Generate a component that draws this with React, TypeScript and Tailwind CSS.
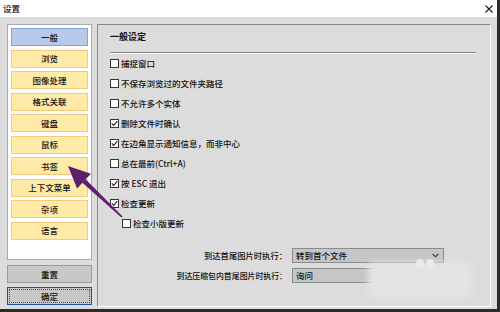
import React from "react";

const items: { label: string; checked: boolean; indent?: boolean }[] = [
  { label: "捕捉窗口", checked: false },
  { label: "不保存浏览过的文件夹路径", checked: false },
  { label: "不允许多个实体", checked: false },
  { label: "删除文件时确认", checked: true },
  { label: "在边角显示通知信息，而非中心", checked: true },
  { label: "总在最前(Ctrl+A)", checked: false },
  { label: "按 ESC 退出", checked: true },
  { label: "检查更新", checked: true },
  { label: "检查小版更新", checked: false, indent: true },
];

const navs = ["一般", "浏览", "图像处理", "格式关联", "键盘", "鼠标", "书签", "上下文菜单", "杂项", "语言"];

function Box({ checked }: { checked: boolean }) {
  return (
    <span className="w-[9px] h-[9px] shrink-0 bg-white border border-[#333333] relative">
      {checked && (
        <svg className="absolute left-0 top-0" width="7" height="7" viewBox="0 0 7 7">
          <polyline points="0.8,3.4 2.7,5.4 6.3,1.2" fill="none" stroke="#222" strokeWidth="1.1" />
        </svg>
      )}
    </span>
  );
}

export default function App() {
  return (
    <div className="w-[500px] h-[312px] relative overflow-hidden bg-[#dcdcdc] border-r-[3px] border-b-[3px] border-[#2b2b2b] font-['Noto_Sans_CJK_SC','Liberation_Sans',sans-serif] font-medium text-[#111111] flex flex-col">
      <div className="h-[17px] shrink-0 bg-white flex items-center justify-between pl-[3px] pr-[4px]">
        <span className="text-[8.5px] leading-none">设置</span>
        <svg width="8" height="8" viewBox="0 0 8 8">
          <path d="M0.5 0.5 L7.5 7.5 M7.5 0.5 L0.5 7.5" stroke="#1a1a1a" strokeWidth="1.1" />
        </svg>
      </div>
      <div className="flex-1 flex pt-[7px] pl-[7px] pr-[6px] pb-[2px] gap-[5px]">
        <div className="w-[85px] flex flex-col">
          <div className="h-[236px] bg-white border border-[#a9a9a9] p-[3px] flex flex-col gap-[3.5px]">
            {navs.map((n, i) => (
              <div
                key={n}
                className={
                  i === 0
                    ? "h-[18px] shrink-0 flex items-center justify-center bg-[#b8c9ea] border border-[#86a3d8] text-[8.5px] leading-none"
                    : "h-[18px] shrink-0 flex items-center justify-center bg-[#ffeaa8] border border-[#f6c87c] text-[8.5px] leading-none"
                }
              >
                {n}
              </div>
            ))}
          </div>
          <div className="mt-[5px] h-[18px] flex items-center justify-center bg-[#c8c8c8] border border-[#9a9a9a] text-[8.5px] leading-none">
            重置
          </div>
          <div className="mt-[4px] h-[18px] p-[1px] bg-[#c8c8c8] border border-[#1d4ea6]">
            <div className="h-full flex items-center justify-center border border-dotted border-[#1d4ea6] text-[8.5px] leading-none">
              确定
            </div>
          </div>
        </div>
        <div className="flex-1 border-t border-l border-t-[#8a8a8a] border-l-[#8a8a8a] border-b border-r border-b-white border-r-white flex flex-col">
          <div className="ml-[12px] mt-[5px] h-[12px] flex items-center text-[9px] font-bold leading-none">一般设定</div>
          <div className="ml-[12px] mr-[14px] mt-[10px] h-[2px] border-t border-t-[#8a8a8a] border-b border-b-white" />
          <div className="flex flex-col -mt-[1px]">
            {items.map((it) => (
              <div key={it.label} className={"h-[20px] flex items-center gap-[2px] " + (it.indent ? "ml-[24px]" : "ml-[12px]")}>
                <Box checked={it.checked} />
                <span className="text-[8.5px] leading-none">{it.label}</span>
              </div>
            ))}
          </div>
          <div className="mt-[15px] grid grid-cols-[189px_152px] gap-x-[5px] gap-y-[5px] items-center">
            <span className="text-right text-[8.3px] leading-none">到达首尾图片时执行：</span>
            <div className="h-[15px] bg-[#c6c6c6] border border-[#8c8c8c] flex items-center justify-between pl-[3px] pr-[4px]">
              <span className="text-[8.5px] leading-none">转到首个文件</span>
              <svg width="7" height="5" viewBox="0 0 7 5">
                <polyline points="0.8,1 3.5,3.8 6.2,1" fill="none" stroke="#333" strokeWidth="1.1" />
              </svg>
            </div>
            <span className="text-right text-[7.9px] leading-none">到达压缩包内首尾图片时执行：</span>
            <div className="h-[15px] bg-[#c6c6c6] border border-[#8c8c8c] flex items-center pl-[3px]">
              <span className="text-[8.5px] leading-none">询问</span>
            </div>
          </div>
        </div>
      </div>
      {/* watermark */}
      <div className="absolute left-[368px] top-[262px] w-[104px] h-[36px] bg-[#e4e4e4] blur-[3px] rounded-[6px] pointer-events-none" />
      <div className="absolute left-[416px] top-[259px] w-[8px] h-[9px] rounded-full bg-[#ebebeb] pointer-events-none" />
      <div className="absolute left-[426px] top-[259px] w-[8px] h-[9px] rounded-full bg-[#ebebeb] pointer-events-none" />
      {/* annotation arrow */}
      <svg className="absolute left-0 top-0 pointer-events-none" width="500" height="312" viewBox="0 0 500 312">
        <polygon points="68,166 90.9,173.8 77.1,188.4" fill="#5e1f6e" />
        <polygon points="85.6,179.2 122.6,216.4 121.4,217.6 82.4,182.8" fill="#5e1f6e" />
      </svg>
    </div>
  );
}
